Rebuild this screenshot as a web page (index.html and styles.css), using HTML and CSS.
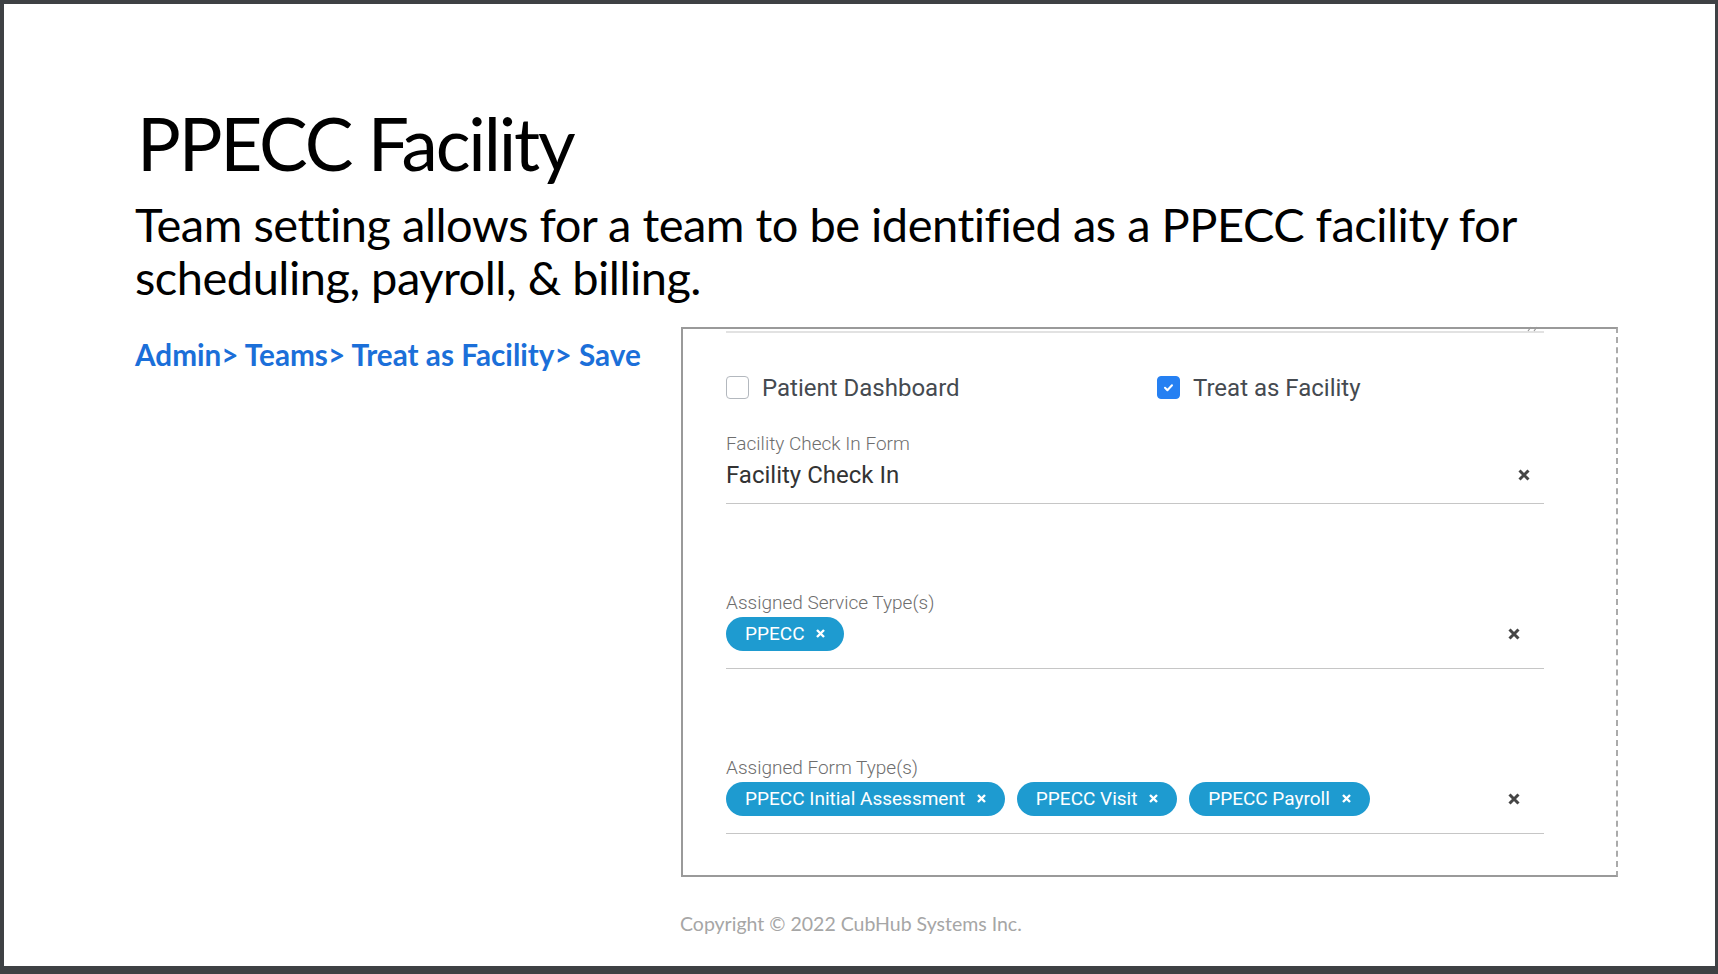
FILE: index.html
```html
<!DOCTYPE html>
<html lang="en">
<head>
    <meta charset="UTF-8">
    <meta name="viewport" content="width=device-width, initial-scale=1.0">
    <title>PPECC Facility</title>
    <link rel="stylesheet" href="styles.css">
</head>
<body>
    <div class="slide">
        <h1 class="title">PPECC Facility</h1>
        <p class="lead">Team setting allows for a team to be identified as a PPECC facility for<br>scheduling, payroll, &amp; billing.</p>

        <div class="row">
            <div class="crumb">Admin&gt; Teams&gt; Treat as Facility&gt; Save</div>

            <div class="panel">
                <div class="prev-line">
                    <svg class="grip" width="14" height="6" viewBox="0 0 14 6"><path d="M2 5 L5 1 M8 5 L11 1" stroke="#9a9a9a" stroke-width="1.2" fill="none"/></svg>
                </div>

                <div class="checks">
                    <label class="check">
                        <span class="box"></span>
                        Patient Dashboard
                    </label>
                    <label class="check">
                        <span class="box checked">
                            <svg width="13" height="13" viewBox="0 0 13 13"><path d="M3 6.8 L5.4 9.2 L10 4.2" stroke="#fff" stroke-width="2" fill="none" stroke-linecap="round" stroke-linejoin="round"/></svg>
                        </span>
                        Treat as Facility
                    </label>
                </div>

                <div class="field first">
                    <div class="field-label">Facility Check In Form</div>
                    <div class="control single">
                        <span class="value">Facility Check In</span>
                        <svg class="clear near" width="12" height="12" viewBox="0 0 12 12"><path d="M1.5 1.5 L10.5 10.5 M10.5 1.5 L1.5 10.5" stroke="#454545" stroke-width="3"/></svg>
                    </div>
                </div>

                <div class="field">
                    <div class="field-label">Assigned Service Type(s)</div>
                    <div class="control">
                        <span class="chip">PPECC <svg width="9" height="9" viewBox="0 0 9 9"><path d="M1 1 L8 8 M8 1 L1 8" stroke="#fff" stroke-width="2.4"/></svg></span>
                        <svg class="clear" width="12" height="12" viewBox="0 0 12 12"><path d="M1.5 1.5 L10.5 10.5 M10.5 1.5 L1.5 10.5" stroke="#454545" stroke-width="3"/></svg>
                    </div>
                </div>

                <div class="field">
                    <div class="field-label">Assigned Form Type(s)</div>
                    <div class="control">
                        <span class="chip">PPECC Initial Assessment <svg width="9" height="9" viewBox="0 0 9 9"><path d="M1 1 L8 8 M8 1 L1 8" stroke="#fff" stroke-width="2.4"/></svg></span>
                        <span class="chip">PPECC Visit <svg width="9" height="9" viewBox="0 0 9 9"><path d="M1 1 L8 8 M8 1 L1 8" stroke="#fff" stroke-width="2.4"/></svg></span>
                        <span class="chip">PPECC Payroll <svg width="9" height="9" viewBox="0 0 9 9"><path d="M1 1 L8 8 M8 1 L1 8" stroke="#fff" stroke-width="2.4"/></svg></span>
                        <svg class="clear" width="12" height="12" viewBox="0 0 12 12"><path d="M1.5 1.5 L10.5 10.5 M10.5 1.5 L1.5 10.5" stroke="#454545" stroke-width="3"/></svg>
                    </div>
                </div>
            </div>
        </div>

        <p class="copyright">Copyright © 2022 CubHub Systems Inc.</p>
    </div>
</body>
</html>
```

FILE: styles.css
```css
* {
    margin: 0;
    padding: 0;
    box-sizing: border-box;
}

body {
    background: #3e4144;
    font-family: 'Lato', sans-serif;
}

.slide {
    background: #fff;
    margin: 4px 3px 0 4px;
    height: 962px;
    padding-left: 133px;
}

.title {
    font-weight: 400;
    font-size: 73px;
    letter-spacing: -2.2px;
    line-height: 1.2;
    color: #000;
    padding-top: 96px;
}

.lead {
    font-size: 47px;
    letter-spacing: -0.5px;
    line-height: 53px;
    color: #000;
    margin-top: 10px;
    margin-left: -2px;
}

.row {
    display: flex;
    margin-top: 23px;
}

.crumb {
    flex: 0 0 544px;
    margin-top: 10px;
    margin-left: -2px;
    font-weight: 700;
    font-size: 29.7px;
    line-height: 1.2;
    color: #1b6fd9;
}

/* form card */
.panel {
    width: 937px;
    margin-left: 2px;
    border: 2px solid #9a9a9a;
    border-right: 2px dashed #aaa;
    padding: 0 72px 41px 43px;
    font-family: 'Roboto', sans-serif;
}

.prev-line {
    position: relative;
    margin-top: 2px;
    border-top: 2px solid #e2e2e2;
}

.grip {
    position: absolute;
    right: 4px;
    top: -7px;
}

.checks {
    display: grid;
    grid-template-columns: 431px 1fr;
    margin-top: 41px;
}

.check {
    display: flex;
    align-items: center;
    gap: 13px;
    font-size: 24px;
    line-height: 28px;
    color: #454a50;
}

.box {
    width: 23px;
    height: 23px;
    border: 1.5px solid #b3b8be;
    border-radius: 4px;
    display: flex;
    align-items: center;
    justify-content: center;
}

.box.checked {
    background: #2580f2;
    border-color: #2580f2;
}

.field {
    margin-top: 88px;
}

.field.first {
    margin-top: 31px;
}

.field-label {
    font-size: 19px;
    font-weight: 300;
    line-height: 22px;
    color: #6e6e6e;
}

.control {
    display: flex;
    align-items: center;
    gap: 12px;
    margin-top: 3px;
    padding-bottom: 17px;
    border-bottom: 1px solid #c6c6c6;
}

.control.single {
    padding-bottom: 11px;
}

.value {
    font-size: 24px;
    line-height: 34px;
    color: #333;
}

.clear {
    margin-left: auto;
    margin-right: 24px;
}

.clear.near {
    margin-right: 14px;
}

.chip {
    display: inline-flex;
    align-items: center;
    gap: 7px;
    height: 34px;
    padding: 0 19px;
    border-radius: 17px;
    background: #1e9bd0;
    color: #fff;
    font-size: 19px;
    white-space: pre;
}

.copyright {
    margin-left: 543px;
    margin-top: 35px;
    font-size: 19.5px;
    line-height: 24px;
    color: #a6a6a6;
}
```
